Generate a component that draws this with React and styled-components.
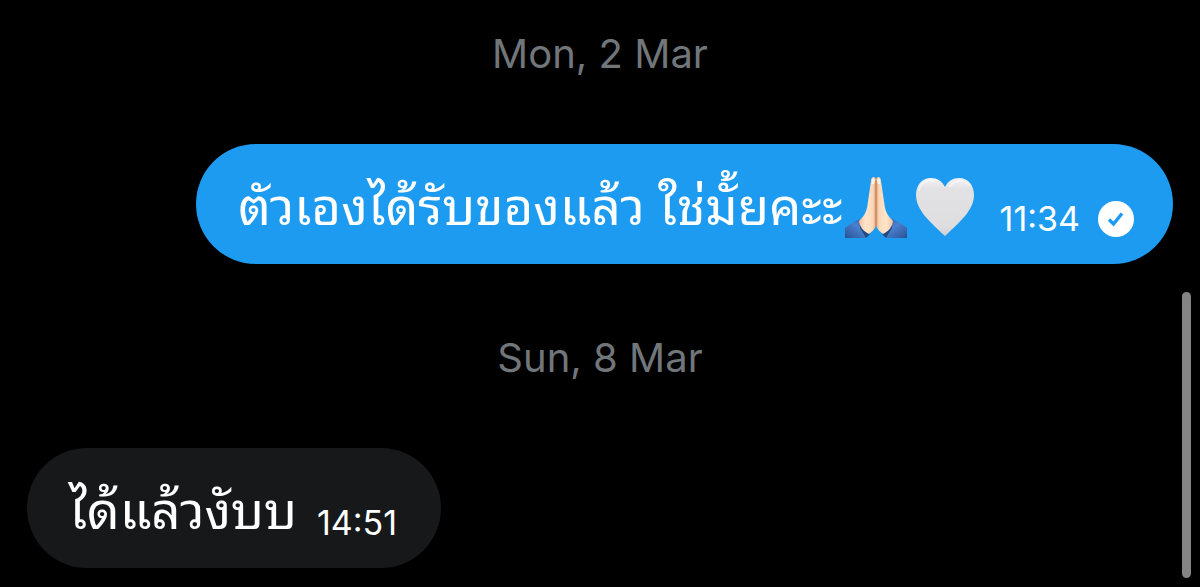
import styled, { createGlobalStyle } from 'styled-components';

const GlobalStyle = createGlobalStyle`
    body {
        margin: 0;
        background-color: #000;
        font-family: Inter, 'Liberation Sans', sans-serif;
    }
`;

const Conversation = styled.main`
    position: relative;
    box-sizing: border-box;
    min-height: 100vh;
    padding: 24px 27px 18px;
    display: flex;
    flex-direction: column;
    gap: 64px;
    background-color: #000;
`;

const Day = styled.section`
    display: flex;
    flex-direction: column;
    gap: 60px;
`;

const DayLabel = styled.h2`
    margin: 0;
    font-size: 40px;
    line-height: 60px;
    font-weight: 400;
    text-align: center;
    color: #71767b;
`;

const Bubble = styled.article`
    align-self: ${({ $sent }) => ($sent ? 'flex-end' : 'flex-start')};
    padding: 22px ${({ $sent }) => ($sent ? '39px' : '44px')} 26px 42px;
    display: flex;
    align-items: flex-end;
    gap: ${({ $sent }) => ($sent ? '26px' : '20px')};
    border-radius: 60px;
    background-color: ${({ $sent }) => ($sent ? '#1d9bf0' : '#16181a')};
    color: #fff;
`;

const Message = styled.p`
    margin: 0;
    display: flex;
    align-items: flex-end;
    font-family: 'Noto Sans Thai Looped', Loma, Waree, Garuda, Umpush, 'Tlwg Typo', Kinnari, Norasi, 'Noto Serif Thai', serif;
    font-size: 51px;
    line-height: 72px;
`;

const Meta = styled.div`
    display: flex;
    align-items: center;
    gap: 18px;
    height: 38px;
`;

const Time = styled.time`
    font-size: 34px;
    line-height: 38px;
`;

const Emoji = styled.svg`
    flex: none;
    width: ${({ $width }) => $width}px;
    height: 62px;
    margin-left: ${({ $space }) => $space || 0}px;
`;

const ReadBadge = styled.svg`
    flex: none;
    width: 36px;
    height: 36px;
`;

// Thumb that floats over the right edge of the conversation
const ScrollThumb = styled.div`
    position: absolute;
    right: 9px;
    bottom: 9px;
    width: 9px;
    height: 286px;
    border-radius: 5px;
    background-color: #848484;
`;

function FoldedHands() {
    return (
        <Emoji $width={62} $space={2} viewBox="0 0 62 62" role="img" aria-label="🙏🏻">
            <defs>
                <linearGradient id="skin" x1="0" y1="0" x2="1" y2="0">
                    <stop offset="0" stopColor="#f0c19c" />
                    <stop offset="0.4" stopColor="#ffe5cb" />
                    <stop offset="0.8" stopColor="#fbd9b9" />
                    <stop offset="1" stopColor="#e5a983" />
                </linearGradient>
                <linearGradient id="sleeve" x1="0" y1="1" x2="1" y2="0">
                    <stop offset="0" stopColor="#2a5292" />
                    <stop offset="0.55" stopColor="#4a80cf" />
                    <stop offset="1" stopColor="#2b5599" />
                </linearGradient>
            </defs>
            <g id="hand">
                <path d="M0 52 C4 48 10 45 15 43 L25 58 L21 62 H0Z" fill="url(#sleeve)" />
                <path d="M15 44 L20 50 L25 58 L21 62 L15 52Z" fill="#244a82" />
                <path d="M26 5 C26 0 31 0 31 4 V49 C30 54 26 56 24 58 C18 55 15 51 14 45 C18 41 21 37 22 32Z" fill="url(#skin)" />
                <path d="M27 4 C28 1 30 2 30 5 L29 8 H27Z" fill="#fff1e4" />
            </g>
            <use href="#hand" transform="translate(62 0) scale(-1 1)" />
            <path d="M31 4 V50" stroke="#b87551" strokeWidth="1" />
        </Emoji>
    );
}

function WhiteHeart() {
    return (
        <Emoji $width={58} $space={9} viewBox="0 0 58 62" role="img" aria-label="🤍">
            <defs>
                <linearGradient id="heart" x1="0" y1="0" x2="0" y2="1">
                    <stop offset="0" stopColor="#f2f2f4" />
                    <stop offset="0.2" stopColor="#e2e2e4" />
                    <stop offset="0.85" stopColor="#dedee0" />
                    <stop offset="1" stopColor="#cfcfd2" />
                </linearGradient>
            </defs>
            <path d="M29 11 C26 5 21 2 15 2 C6 2 0 9 0 19 C0 34 14 46 29 60 C44 46 58 34 58 19 C58 9 52 2 43 2 C37 2 32 5 29 11Z" fill="url(#heart)" />
            <path d="M3 14 C5 6 12 3 18 5 M34 10 C39 4 48 3 53 9" fill="none" stroke="#fff" strokeOpacity="0.45" strokeWidth="2" strokeLinecap="round" />
        </Emoji>
    );
}

function Read() {
    return (
        <ReadBadge viewBox="0 0 36 36" role="img" aria-label="Read">
            <circle cx="18" cy="18" r="18" fill="#fff" />
            <path d="M11 18.5 L15.5 23 L24 12.5" fill="none" stroke="#1d9bf0" strokeWidth="3.4" />
        </ReadBadge>
    );
}

function App() {
    return (
        <>
            <GlobalStyle />
            <Conversation>
                <Day>
                    <DayLabel>Mon, 2 Mar</DayLabel>
                    <Bubble $sent>
                        <Message lang="th">
                            ตัวเองได้รับของแล้ว ใช่มั้ยคะะ
                            <FoldedHands />
                            <WhiteHeart />
                        </Message>
                        <Meta>
                            <Time>11:34</Time>
                            <Read />
                        </Meta>
                    </Bubble>
                </Day>
                <Day>
                    <DayLabel>Sun, 8 Mar</DayLabel>
                    <Bubble>
                        <Message lang="th">ได้แล้วงับบ</Message>
                        <Meta>
                            <Time>14:51</Time>
                        </Meta>
                    </Bubble>
                </Day>
                <ScrollThumb />
            </Conversation>
        </>
    );
}

export default App;
